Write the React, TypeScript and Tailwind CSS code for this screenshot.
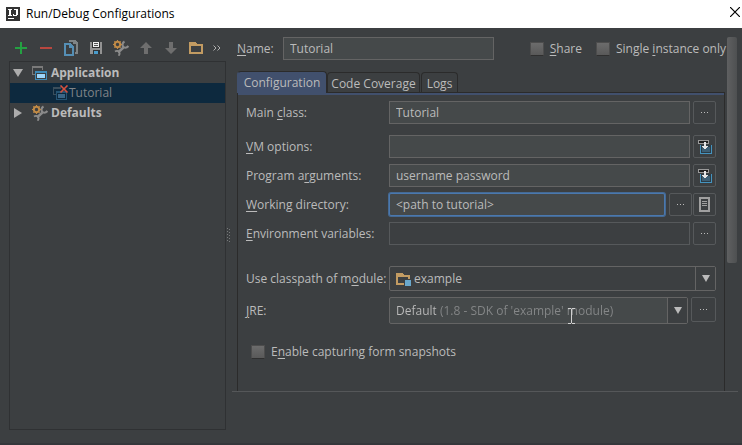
import React from "react";
import type { ReactNode } from "react";

const Key = ({ children }: { children: ReactNode }) => (
  <span className="underline decoration-1 underline-offset-2">{children}</span>
);

const field =
  "h-[23px] min-w-0 flex-1 border border-[#646464] bg-[#45494a] px-[6px] text-[#bbbbbb] outline-none";
const toolButton = "flex h-5 w-[25px] items-center justify-center";

function Wrench() {
  return (
    <svg width="16" height="16" viewBox="0 0 16 16" fill="none">
      <path d="M10.500 7.500 5 12.500" stroke="#8b8b8b" strokeWidth="2.4" />
      <path d="M11.500 1.500c-2 1-2.500 3.500-1.500 5s3.500 2 5.500-.5" stroke="#8b8b8b" strokeWidth="2.2" />
      <path d="M2 11.500c1.500-1 3.500-.7 4.200.6s.3 2.700-.7 3.600" stroke="#8b8b8b" strokeWidth="1.800" />
      <circle cx="4.500" cy="4.500" r="2.700" stroke="#c08a46" strokeWidth="2" />
      <path
        d="M4.500 0v1.500M4.500 7.500V9M0 4.500h1.500M7.500 4.500H9M1.300 1.300l1 1M6.700 6.700l1 1M7.700 1.300l-1 1M2.300 6.700l-1 1"
        stroke="#c08a46"
      />
    </svg>
  );
}

function AppIcon() {
  return (
    <svg width="16" height="16" viewBox="0 0 16 16" shapeRendering="crispEdges">
      <path d="M0 1h11v4h-1V3H1v6h2v1H0z" fill="#7a7a7a" />
      <path d="M3 6h12v9H3z" fill="#3e8bb8" />
      <path d="M4 8h10v6H4z" fill="#3c3f41" />
      <path d="M5 9h8v4H5z" fill="#9bd5fa" />
    </svg>
  );
}

function BrokenAppIcon() {
  return (
    <svg width="16" height="16" viewBox="0 0 16 16">
      <g shapeRendering="crispEdges">
        <path d="M0 2h8v2H1v5h2v1H0z" fill="#3b4e5b" />
        <path d="M3 6h11v9H3z" fill="#255473" />
        <path d="M4 8h9v6H4z" fill="#0d293e" />
        <path d="M5 9h7v4H5z" fill="#3a6687" />
      </g>
      <path d="m7.500 .5 7 7M14.500 .5l-7 7" stroke="#d5513f" strokeWidth="1.600" />
    </svg>
  );
}

function InsertIcon() {
  return (
    <svg width="16" height="16" viewBox="0 0 16 16" shapeRendering="crispEdges">
      <path d="M3 6h12v9H3z" fill="#4593bf" />
      <path d="M4 6h10v8H4z" fill="#2b3b45" />
      <path d="M5 8h8v5H5z" fill="#3d5f75" />
      <path d="M1 1h11v4H1z" fill="#9a9a9a" />
      <path d="M2 2h9v2H2z" fill="#1e1e1e" />
      <path d="M7 3h2v4h2v1h-1v1H9v1H7V9H6V8H5V7h2z" fill="#e6e6e6" />
    </svg>
  );
}

function FolderIcon({ module = false }: { module?: boolean }) {
  return (
    <svg width="16" height="16" viewBox="0 0 16 16" shapeRendering="crispEdges">
      <path d="M1 2h6l2 2h6v10H1zM3 6v6h10V6z" fillRule="evenodd" fill="#c29b62" />
      {module && (
        <>
          <path d="M9 8h6v6H9z" fill="#3c3f41" />
          <path d="M10 9h6v6h-6z" fill="#6aa8cc" />
        </>
      )}
    </svg>
  );
}

const tools: { name: string; icon: ReactNode }[] = [
  {
    name: "Add",
    icon: <path d="M7 2h2v5h5v2H9v5H7V9H2V7h5z" fill="#24a142" />,
  },
  { name: "Remove", icon: <path d="M2 7h12v2H2z" fill="#b9473f" /> },
  {
    name: "Copy",
    icon: (
      <>
        <path d="M6 0h6l3 3v11h-3v-2h1V4h-3V2H6z" fill="#7f8486" />
        <path d="M1 3h6l4 4v9H1zM3 5v9h6V8H6V5z" fillRule="evenodd" fill="#558fb5" />
      </>
    ),
  },
  {
    name: "Save",
    icon: (
      <>
        <path d="M2 2h12v12H2z" fill="#939393" />
        <path d="M4 2h8v6H4z" fill="#303030" />
        <path d="M5 2h6v5H5z" fill="#f0f0f0" />
        <path d="M6 3h4v1H6zM6 5h4v1H6z" fill="#555555" />
        <path d="M5 10h7v4H5z" fill="#303437" />
        <path d="M6 11h4v3H6z" fill="#4a9ccb" />
      </>
    ),
  },
];

function Check({ children }: { children: ReactNode }) {
  return (
    <label className="flex items-center gap-[6px] whitespace-nowrap">
      <input
        type="checkbox"
        className="size-[14px] shrink-0 appearance-none border border-[#4d4d4d] border-b-[#2f2f2f] bg-linear-to-b from-[#6c6c6c] to-[#595959]"
      />
      <span>{children}</span>
    </label>
  );
}

function Row({ id, label, children }: { id: string; label: ReactNode; children: ReactNode }) {
  return (
    <div className="flex items-center">
      <label htmlFor={id} className="w-[143px] shrink-0 whitespace-nowrap">
        {label}
      </label>
      <div className="flex min-w-0 flex-1 gap-[3px]">{children}</div>
    </div>
  );
}

function SideButton({ label, large = false, children }: { label: string; large?: boolean; children?: ReactNode }) {
  return (
    <button
      type="button"
      aria-label={label}
      className={`flex shrink-0 items-center justify-center rounded-xs border border-[#56595b] ${large ? "size-[25px]" : "size-[23px]"}`}
    >
      {children ?? (
        <svg width="7" height="1" viewBox="0 0 7 1" shapeRendering="crispEdges" fill="#bbbbbb">
          <path d="M0 0h1v1H0zM3 0h1v1H3zM6 0h1v1H6z" />
        </svg>
      )}
    </button>
  );
}

function DropArrow() {
  return (
    <span className="pointer-events-none flex w-5 shrink-0 items-center justify-center border-l border-[#646464] bg-[#3c3f41]">
      <svg width="8" height="7" viewBox="0 0 8 7" fill="#bbbbbb">
        <path d="M0 0h8L4 7z" />
      </svg>
    </span>
  );
}

function Toolbar() {
  return (
    <div className="flex h-[33px] items-center pt-[7px]">
      {tools.map((t) => (
        <button key={t.name} type="button" aria-label={t.name} className={toolButton}>
          <svg width="16" height="16" viewBox="0 0 16 16" shapeRendering="crispEdges">
            {t.icon}
          </svg>
        </button>
      ))}
      <button type="button" aria-label="Edit defaults" className={toolButton}>
        <Wrench />
      </button>
      <button type="button" aria-label="Move up" className={toolButton}>
        <svg width="16" height="16" viewBox="0 0 16 16" fill="#6e6e6e">
          <path d="m8 2 6 6h-4v6H6V8H2z" />
        </svg>
      </button>
      <button type="button" aria-label="Move down" className={toolButton}>
        <svg width="16" height="16" viewBox="0 0 16 16" fill="#6e6e6e">
          <path d="m8 14 6-6h-4V2H6v6H2z" />
        </svg>
      </button>
      <button type="button" aria-label="New folder" className={toolButton}>
        <FolderIcon />
      </button>
      <button type="button" aria-label="More" className="flex h-5 w-[18px] items-center justify-center">
        <svg width="8" height="6" viewBox="0 0 8 6" fill="none" stroke="#b0b0b0">
          <path d="m.5.5 2.5 2.5L.5 5.5M4.500.5 7 3 4.500 5.500" />
        </svg>
      </button>
    </div>
  );
}

function Tree() {
  return (
    <ul role="tree" className="ml-px flex-1 border border-[#2f3133] pt-px">
      <li role="treeitem" className="flex h-5 items-center pl-[3px] font-bold">
        <svg width="10" height="8" viewBox="0 0 10 8" fill="#adadad">
          <path d="M0 0h10L5 8z" />
        </svg>
        <span className="mr-[3px] ml-[9px]">
          <AppIcon />
        </span>
        Application
      </li>
      <li role="treeitem" aria-selected="true" className="flex h-5 items-center bg-[#0d293e] pl-[43px] text-[#808487]">
        <BrokenAppIcon />
        Tutorial
      </li>
      <li role="treeitem" className="flex h-5 items-center pl-1 font-bold">
        <svg width="8" height="10" viewBox="0 0 8 10" fill="#adadad">
          <path d="m0 0 8 5-8 5z" />
        </svg>
        <span className="mr-[3px] ml-[10px]">
          <Wrench />
        </span>
        Defaults
      </li>
    </ul>
  );
}

function Tabs() {
  const idle = "h-5 rounded-t-sm border border-b-0 border-[#2b2b2b] pt-[3px] whitespace-nowrap";
  return (
    <div role="tablist" className="flex h-[21px] items-end">
      <button
        type="button"
        role="tab"
        aria-selected="true"
        className="relative -mb-px h-[22px] w-[90px] rounded-t-sm border border-b-0 border-[#2b2b2b] border-l-[#41506d] bg-[#41506d] whitespace-nowrap"
      >
        Configuration
      </button>
      <button type="button" role="tab" aria-selected="false" className={`${idle} w-[93px]`}>
        Code Coverage
      </button>
      <button type="button" role="tab" aria-selected="false" className={`${idle} ml-px w-[37px]`}>
        Logs
      </button>
    </div>
  );
}

function Settings() {
  return (
    <div className="border-x border-t border-[#2b2b2b]">
      <div className="h-[2px] bg-[#41506d]" />
      <div className="flex flex-col gap-[6px] pt-[6px] pr-2 pb-[31px] pl-2">
        <div className="mb-[5px]">
          <Row id="main" label={<>Main <Key>c</Key>lass:</>}>
            <input id="main" className={field} defaultValue="Tutorial" />
            <SideButton label="Browse classes" />
          </Row>
        </div>
        <Row id="vm" label={<><Key>V</Key>M options:</>}>
          <input id="vm" className={field} />
          <SideButton label="Expand VM options">
            <InsertIcon />
          </SideButton>
        </Row>
        <Row id="args" label={<>Program a<Key>r</Key>guments:</>}>
          <input id="args" className={field} defaultValue="username password" />
          <SideButton label="Expand arguments">
            <InsertIcon />
          </SideButton>
        </Row>
        <Row id="dir" label={<><Key>W</Key>orking directory:</>}>
          <input
            id="dir"
            className="mr-px h-[23px] min-w-0 flex-1 rounded-xs border border-[#4a78ae] bg-[#45494a] px-[6px] text-[#bbbbbb] ring-1 ring-[#456a94] outline-none"
            defaultValue="<path to tutorial>"
          />
          <div className="flex gap-px">
            <SideButton label="Browse directory" />
            <SideButton label="Insert macro">
              <svg width="11" height="15" viewBox="0 0 11 15" shapeRendering="crispEdges">
                <path d="M0 0h11v15H0zM2 2v11h7V2z" fillRule="evenodd" fill="#a0a0a0" />
                <path d="M3 4h5v1H3zM3 6h5v1H3zM3 8h5v1H3z" fill="#a0a0a0" />
              </svg>
            </SideButton>
          </div>
        </Row>
        <Row id="env" label={<><Key>E</Key>nvironment variables:</>}>
          <input
            id="env"
            className="h-[23px] min-w-0 flex-1 border border-[#56595b] bg-[#3c3f41] px-[6px] outline-none"
          />
          <SideButton label="Edit variables" />
        </Row>
        <div className="mt-[15px]">
          <Row id="module" label={<>Use classpath of m<Key>o</Key>dule:</>}>
            <div className="flex h-[25px] min-w-0 flex-1 items-stretch rounded-xs border border-[#646464] pl-[5px]">
              <span className="flex items-center">
                <FolderIcon module />
              </span>
              <select id="module" className="min-w-0 flex-1 appearance-none bg-transparent pl-[3px] outline-none">
                <option>example</option>
              </select>
              <DropArrow />
            </div>
          </Row>
        </div>
        <Row id="jre" label={<><Key>J</Key>RE:</>}>
          <div className="relative flex h-[27px] min-w-0 flex-1 items-stretch rounded-xs border border-[#646464] bg-[#45494a]">
            <select
              id="jre"
              className="min-w-0 flex-1 appearance-none bg-[linear-gradient(to_right,#bbbbbb_46px,#858788_46px)] bg-clip-text pl-[6px] text-transparent outline-none"
            >
              <option>Default (1.8 - SDK of 'example' module)</option>
            </select>
            <DropArrow />
            <svg
              className="pointer-events-none absolute top-[10px] left-[178px]"
              width="7"
              height="16"
              viewBox="0 0 7 16"
              shapeRendering="crispEdges"
              fill="#d0d0d0"
            >
              <path d="M0 0h3v1h1V0h3v1H4v14h3v1H4v-1H3v1H0v-1h3V1H0z" />
            </svg>
          </div>
          <SideButton label="Browse JRE" large />
        </Row>
        <div className="mt-[14px] ml-[5px]">
          <Check>
            E<Key>n</Key>able capturing form snapshots
          </Check>
        </div>
      </div>
    </div>
  );
}

export default function App() {
  return (
    <div className="flex min-h-screen flex-col border-b-2 border-[#35373b] bg-[#3c3f41] font-['Open_Sans','Noto_Sans',sans-serif] text-xs leading-4 text-[#bbbbbb]">
      <header className="flex h-7 items-center bg-white pr-[2px] pl-[6px] text-black">
        <svg width="14" height="14" viewBox="0 0 14 14" shapeRendering="crispEdges">
          <path d="M0 0h14v14H0z" fill="#333333" />
          <path d="M2 2h4v1H5v5h1v1H2V8h1V3H2zM8 2h4v6h-1v1H7V7h1v1h2V3H8zM2 11h6v1H2z" fill="#ffffff" />
        </svg>
        <h1 className="ml-[6px] flex-1">Run/Debug Configurations</h1>
        <button type="button" aria-label="Close" className="-mt-1">
          <svg width="10" height="10" viewBox="0 0 10 10" stroke="#000000" strokeWidth="1.200">
            <path d="m0 0 10 10M10 0 0 10" />
          </svg>
        </button>
      </header>
      <main className="flex flex-1">
        <aside className="flex w-[226px] shrink-0 flex-col pb-[13px] pl-2">
          <Toolbar />
          <Tree />
        </aside>
        <div className="flex w-[6px] items-center justify-center">
          <svg width="4" height="15" viewBox="0 0 4 15" shapeRendering="crispEdges" fill="#77797a">
            <path d="M0 0h1v1H0zM2 1h1v1H2zM0 3h1v1H0zM2 4h1v1H2zM0 6h1v1H0zM2 7h1v1H2zM0 9h1v1H0zM2 10h1v1H2zM0 12h1v1H0zM2 13h1v1H2z" />
          </svg>
        </div>
        <div className="mr-1 min-w-0 flex-1">
          <div className="flex border-b border-[#555759] pt-[9px]">
            <section className="min-w-0 flex-1 pr-px pl-[5px]">
              <div className="flex items-center">
                <label htmlFor="name" className="w-[46px] shrink-0">
                  <Key>N</Key>ame:
                </label>
                <input id="name" className={field} defaultValue="Tutorial" />
                <div className="ml-9 flex gap-[14px]">
                  <Check>
                    <Key>S</Key>hare
                  </Check>
                  <Check>
                    Single <Key>i</Key>nstance only
                  </Check>
                </div>
              </div>
              <div className="mr-px pt-[11px]">
                <Tabs />
                <Settings />
              </div>
            </section>
            <div className="w-[11px]">
              <div className="h-[226px] w-[10px] rounded-xs bg-linear-to-r from-[#5f6061] to-[#4e5051]" />
            </div>
          </div>
        </div>
      </main>
    </div>
  );
}
